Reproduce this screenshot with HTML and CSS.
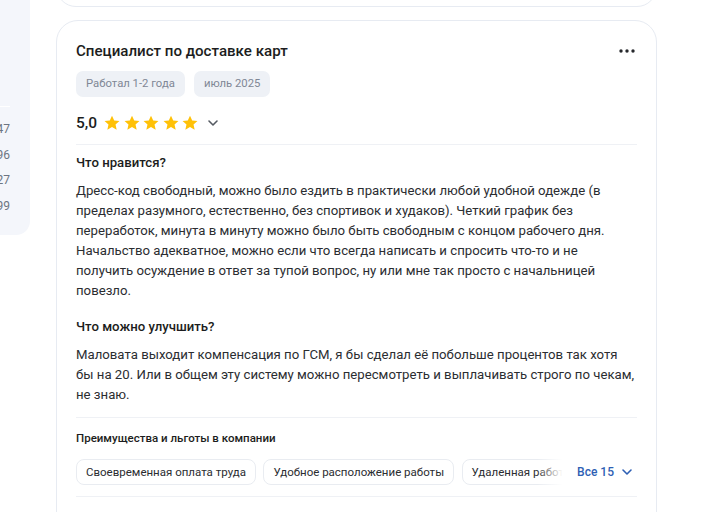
FILE: index.html
```html
<!DOCTYPE html>
<html lang="ru">
<head>
<meta charset="utf-8">
<link rel="stylesheet" href="styles.css">
</head>
<body>
<div class="page">
  <aside class="side">
    <div class="side-line"></div>
    <div class="side-num">47</div>
    <div class="side-num">96</div>
    <div class="side-num">27</div>
    <div class="side-num">99</div>
  </aside>
  <main class="main">
    <div class="card card-prev"></div>
    <article class="card review">
      <div class="head">
        <h2 class="title">Специалист по доставке карт</h2>
        <button class="more" aria-label="Ещё">
          <svg width="16" height="4" viewBox="0 0 16 4"><circle cx="2" cy="2" r="1.7"/><circle cx="8" cy="2" r="1.7"/><circle cx="14" cy="2" r="1.7"/></svg>
        </button>
      </div>
      <div class="tags">
        <span class="tag">Работал 1-2 года</span>
        <span class="tag">июль 2025</span>
      </div>
      <div class="rating">
        <span class="score">5,0</span>
        <span class="stars">
          <svg class="star" viewBox="0 0 24 24"><path d="M12 2.2l2.95 6.4 7 .75-5.25 4.7 1.5 6.9L12 17.4l-6.2 3.55 1.5-6.9-5.250-4.7 7-.75z"/></svg>
          <svg class="star" viewBox="0 0 24 24"><path d="M12 2.2l2.95 6.4 7 .75-5.25 4.7 1.5 6.9L12 17.4l-6.2 3.55 1.5-6.9-5.25-4.7 7-.75z"/></svg>
          <svg class="star" viewBox="0 0 24 24"><path d="M12 2.2l2.95 6.4 7 .75-5.25 4.7 1.5 6.9L12 17.4l-6.2 3.55 1.5-6.9-5.25-4.7 7-.75z"/></svg>
          <svg class="star" viewBox="0 0 24 24"><path d="M12 2.2l2.95 6.4 7 .75-5.25 4.7 1.5 6.9L12 17.4l-6.2 3.55 1.5-6.9-5.25-4.7 7-.75z"/></svg>
          <svg class="star" viewBox="0 0 24 24"><path d="M12 2.2l2.95 6.4 7 .75-5.25 4.7 1.5 6.9L12 17.4l-6.2 3.55 1.5-6.9-5.25-4.7 7-.75z"/></svg>
        </span>
        <svg class="chev" width="12" height="8" viewBox="0 0 12 8"><path d="M2 2l4 4 4-4"/></svg>
      </div>
      <div class="divider"></div>
      <section class="block">
        <h3 class="q">Что нравится?</h3>
        <p class="text">Дресс-код свободный, можно было ездить в практически любой удобной одежде (в пределах разумного, естественно, без спортивок и худаков). Четкий график без переработок, минута в минуту можно было быть свободным с концом рабочего дня. Начальство адекватное, можно если что всегда написать и спросить что-то и не получить осуждение в ответ за тупой вопрос, ну или мне так просто с начальницей повезло.</p>
      </section>
      <section class="block block-2">
        <h3 class="q">Что можно улучшить?</h3>
        <p class="text">Маловата выходит компенсация по ГСМ, я бы сделал её побольше процентов так хотя бы на 20. Или в общем эту систему можно пересмотреть и выплачивать строго по чекам, не знаю.</p>
      </section>
      <div class="divider divider-2"></div>
      <h4 class="perks-title">Преимущества и льготы в компании</h4>
      <div class="perks">
        <div class="chips">
          <span class="chip">Своевременная оплата труда</span>
          <span class="chip">Удобное расположение работы</span>
          <span class="chip">Удаленная работа</span>
          <span class="chip">Гибкий график</span>
        </div>
        <button class="all">Все 15
          <svg class="chev chev-blue" width="12" height="8" viewBox="0 0 12 8"><path d="M2 2l4 4 4-4"/></svg>
        </button>
      </div>
      <div class="divider divider-3"></div>
    </article>
  </main>
</div>
</body>
</html>
```

FILE: styles.css
```css
* { box-sizing: border-box; }
html, body { margin: 0; padding: 0; background: #ffffff; }
body {
  font-family: Roboto, "Noto Sans", "Liberation Sans", sans-serif;
  color: #222326;
  height: 512px;
  overflow: hidden;
}
.page {
  display: flex;
  align-items: flex-start;
  gap: 26px;
}
.side {
  width: 30px;
  height: 235px;
  flex: none;
  background: #f4f6fb;
  border-bottom-right-radius: 14px;
  padding-top: 106px;
  padding-right: 20px;
}
.side-line {
  height: 1px;
  background: #ffffff;
  margin-bottom: 10px;
}
.side-num {
  font-size: 12px;
  line-height: 25.5px;
  color: #6d7582;
  text-align: right;
  white-space: nowrap;
  direction: rtl;
}
.main {
  width: 601px;
  flex: none;
}
.card {
  border: 1px solid #e7ebf2;
  border-radius: 22px;
  background: #fff;
}
.card-prev {
  height: 40px;
  margin-top: -33px;
  margin-bottom: 13px;
}
.review {
  padding: 17px 19px 0 19px;
  height: 520px;
}
.head {
  display: flex;
  align-items: center;
  justify-content: space-between;
  height: 26px;
}
.title {
  margin: 0;
  font-size: 15.1px;
  font-weight: 500;
  line-height: 26px;
  color: #1c1d20;
}
.more {
  border: 0;
  background: none;
  padding: 0;
  margin-right: 2px;
  display: flex;
  fill: #26282c;
}
.tags {
  display: flex;
  gap: 9px;
  margin-top: 7px;
}
.tag {
  background: #eef1f6;
  border-radius: 7px;
  height: 26px;
  line-height: 26px;
  padding: 0 10px;
  font-size: 11.3px;
  color: #7f8795;
}
.rating {
  display: flex;
  align-items: center;
  height: 24px;
  margin-top: 14px;
}
.score {
  font-size: 15.5px;
  font-weight: 500;
  color: #1c1d20;
  margin-right: 6px;
}
.stars {
  display: flex;
  gap: 1.5px;
}
.star {
  width: 18px;
  height: 18px;
  fill: #ffc107;
}
.chev {
  fill: none;
  stroke: #555a62;
  stroke-width: 1.6;
  stroke-linecap: round;
  stroke-linejoin: round;
  margin-left: 8px;
}
.divider {
  height: 1px;
  background: #eff1f5;
  margin-top: 9px;
}
.block { margin-top: 8px; }
.block-2 { margin-top: 16px; }
.q {
  margin: 0;
  font-size: 13.2px;
  font-weight: 500;
  line-height: 20px;
  color: #1c1d20;
}
.text {
  margin: 8px 0 0;
  font-size: 13.2px;
  line-height: 20px;
  color: #2b2d31;
}
.divider-2 { margin-top: 12px; }
.perks-title {
  margin: 12px 0 0;
  font-size: 11.5px;
  font-weight: 500;
  line-height: 16px;
  color: #1c1d20;
}
.perks {
  display: flex;
  align-items: center;
  margin-top: 13px;
  gap: 10px;
}
.chips {
  flex: 1;
  display: flex;
  gap: 7.5px;
  overflow: hidden;
  position: relative;
  min-width: 0;
}
.chips::after {
  content: "";
  position: absolute;
  top: 0;
  right: 0;
  bottom: 0;
  width: 30px;
  background: linear-gradient(to right, rgba(255,255,255,0), #fff 85%);
}
.chip {
  flex: none;
  height: 26px;
  line-height: 24px;
  border: 1px solid #e9ecf1;
  border-radius: 8px;
  padding: 0 9px;
  font-size: 11.5px;
  color: #2b2d31;
  white-space: nowrap;
}
.all {
  flex: none;
  display: flex;
  align-items: center;
  border: 0;
  background: none;
  padding: 0;
  font-family: inherit;
  font-size: 12px;
  font-weight: 500;
  color: #2e5fb4;
  margin-right: 4px;
}
.chev-blue { stroke: #2e5fb4; margin-left: 7px; }
.divider-3 { margin-top: 11px; }
```
